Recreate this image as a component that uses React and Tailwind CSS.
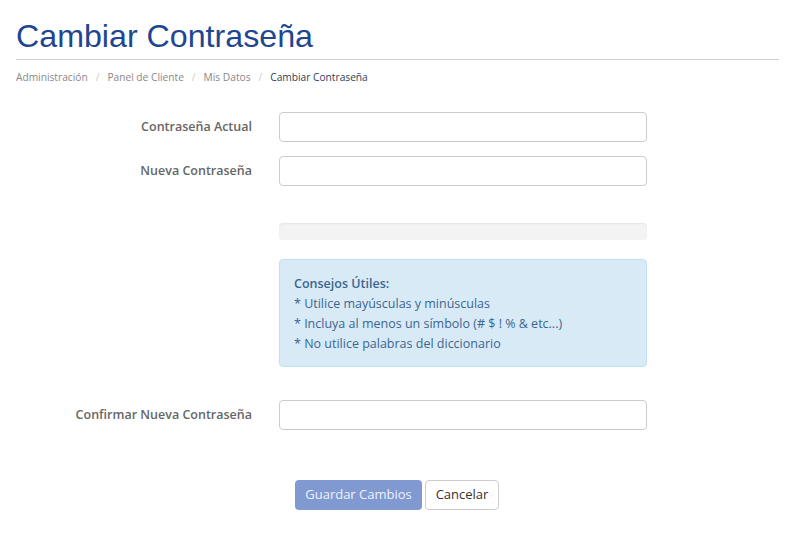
import React from 'react';

const crumbs = ['Administración', 'Panel de Cliente', 'Mis Datos'];

const tips = [
  '* Utilice mayúsculas y minúsculas',
  '* Incluya al menos un símbolo (# $ ! % & etc...)',
  '* No utilice palabras del diccionario',
];

const Row = ({ label, className = '' }) => (
  <div className={`flex items-center ${className}`}>
    <label className="w-[236px] pt-px text-right text-[12.5px] font-semibold text-[#666]">{label}</label>
    <input
      type="password"
      className="ml-[27px] w-[368px] h-[30px] border border-[#ccc] rounded-[4px] bg-white outline-none"
    />
  </div>
);

const App = () => {
  return (
    <div className="min-h-[538px] bg-white pl-4 pr-[29px] font-['Open_Sans',sans-serif]">
      {/* Header */}
      <h1 className="pt-[19px] pb-[5px] border-b border-[#cfcfcf] font-['Liberation_Sans',Arial,sans-serif] text-[32.2px] leading-[35px] text-[#1f4690]">
        Cambiar Contraseña
      </h1>

      <nav className="mt-[9px] flex items-center text-[10.2px] leading-4">
        {crumbs.map((c) => (
          <React.Fragment key={c}>
            <span className="text-[#888]">{c}</span>
            <span className="px-[8px] text-[#ccc]">/</span>
          </React.Fragment>
        ))}
        <span className="text-[#2d3e5c]">Cambiar Contraseña</span>
      </nav>

      {/* Form */}
      <Row label="Contraseña Actual" className="mt-[27px]" />
      <Row label="Nueva Contraseña" className="mt-[14px]" />

      <div className="ml-[263px] mt-[37px] w-[368px] h-[17px] rounded-[4px] bg-[#f3f3f3] shadow-[inset_0_1px_2px_rgba(0,0,0,0.06)]" />

      <div className="ml-[263px] mt-[19px] w-[368px] h-[108px] border border-[#bfe2f3] rounded-[4px] bg-[#d9eaf7] px-[14px] pt-[14px] pb-[12px] text-[12.5px] leading-5 text-[#3a6690]">
        <p className="font-semibold">Consejos Útiles:</p>
        {tips.map((t) => (
          <p key={t}>{t}</p>
        ))}
      </div>

      <Row label="Confirmar Nueva Contraseña" className="mt-[33px]" />

      <div className="mt-[50px] ml-[279px] flex gap-[3px]">
        <button className="w-[127px] h-[30px] rounded-[4px] bg-[#8199d1] text-[13px] text-[#eef2fa]">
          Guardar Cambios
        </button>
        <button className="w-[74px] h-[30px] rounded-[4px] border border-[#ccc] bg-white text-[13px] text-[#333]">
          Cancelar
        </button>
      </div>
    </div>
  );
};

export default App;
